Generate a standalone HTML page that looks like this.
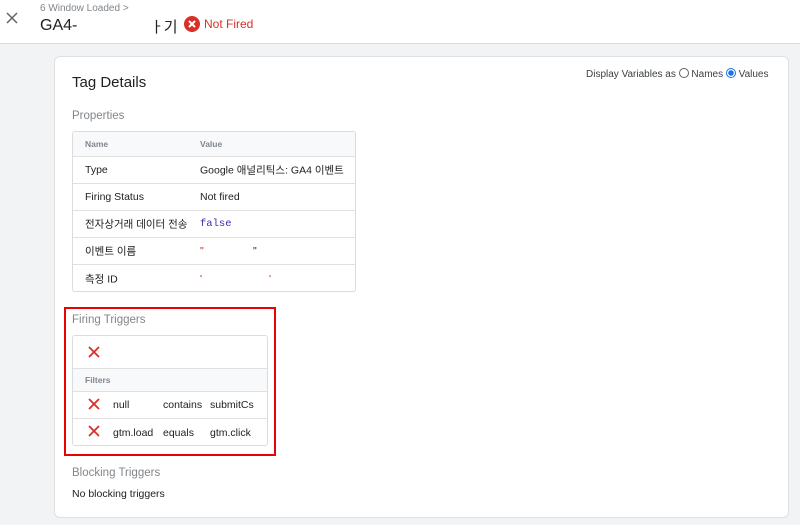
<!DOCTYPE html>
<html><head><meta charset="utf-8"><style>
*{box-sizing:border-box;margin:0;padding:0}
body{width:800px;height:525px;overflow:hidden;background:#f1f3f4;font-family:"Liberation Sans","Noto Sans CJK KR",sans-serif;color:#202124;position:relative}
.hdr{position:absolute;left:0;top:0;width:800px;height:44px;background:#fff;border-bottom:1px solid #dadce0}
.abs{position:absolute;white-space:nowrap}
.card{position:absolute;left:54px;top:56px;width:735px;height:462px;background:#fff;border:1px solid #e0e0e0;border-radius:6px}
.tbl{position:absolute;border:1px solid #dadce0;border-radius:3px;overflow:hidden;background:#fff}
.row{position:absolute;left:0;right:0;border-top:1px solid #e0e0e0;font-size:10.5px}
.row span{position:absolute;top:50%;transform:translateY(-50%)}
.x{position:absolute;width:14px;height:14px}
.sec{font-size:11.5px;color:#80868b;font-weight:500}
</style></head><body>
<div class="hdr">
<svg class="abs" style="left:6px;top:12px" width="12" height="12" viewBox="0 0 12 12"><path d="M1 1L11 11M11 1L1 11" stroke="#5f6368" stroke-width="1.5"/></svg>
<div class="abs" style="left:40px;top:3px;font-size:10px;color:#80868b">6 Window Loaded &gt;</div>
<div class="abs" style="left:40px;top:17px;font-size:16px;color:#202124">GA4-</div>
<div class="abs" style="left:150px;top:16px;font-size:15px;color:#202124">ㅏ기</div>
<svg class="abs" style="left:184px;top:16px" width="16" height="16" viewBox="0 0 16 16"><circle cx="8" cy="8" r="8" fill="#d93025"/><path d="M5 5L11 11M11 5L5 11" stroke="#fff" stroke-width="2"/></svg>
<div class="abs" style="left:204px;top:17px;font-size:12px;color:#d93025">Not Fired</div>
</div>
<div class="card"></div>
<div class="abs" style="left:72px;top:74px;font-size:15px">Tag Details</div>
<div class="abs" style="left:586px;top:68px;font-size:10px;color:#3c4043">Display Variables as <span style="display:inline-block;width:10px;height:10px;border:1px solid #5f6368;border-radius:50%;vertical-align:-1px"></span> Names <span style="display:inline-block;width:10px;height:10px;border:1.5px solid #1a73e8;border-radius:50%;vertical-align:-1px;background:radial-gradient(#1a73e8 2.5px,#fff 3px)"></span> Values</div>
<div class="abs sec" style="left:72px;top:110px">Properties</div>
<div class="tbl" style="left:72px;top:131px;width:284px;height:161px">
<div class="row" style="top:0;height:24px;border:0;background:#f8f9fa;font-size:8.5px;color:#80868b;font-weight:bold"><span style="left:12px">Name</span><span style="left:127px">Value</span></div>
<div class="row" style="top:24px;height:27px"><span style="left:12px">Type</span><span style="left:127px">Google 애널리틱스: GA4 이벤트</span></div>
<div class="row" style="top:51px;height:27px"><span style="left:12px">Firing Status</span><span style="left:127px">Not fired</span></div>
<div class="row" style="top:78px;height:27px"><span style="left:12px">전자상거래 데이터 전송</span><span style="left:127px;color:#3c2db0;font-family:'Liberation Mono',monospace">false</span></div>
<div class="row" style="top:105px;height:27px"><span style="left:12px">이벤트 이름</span><span style="left:127px;color:#c5221f">"</span><span style="left:180px">"</span></div>
<div class="row" style="top:132px;height:29px"><span style="left:12px">측정 ID</span><span style="left:127px;color:#c5221f">'</span><span style="left:196px;color:#c5221f">'</span></div>
</div>
<div class="abs" style="left:64px;top:307px;width:212px;height:149px;border:2px solid #e00"></div>
<div class="abs sec" style="left:72px;top:314px">Firing Triggers</div>
<div class="tbl" style="left:72px;top:335px;width:196px;height:111px">
<div class="row" style="top:0;height:32px;border:0"></div>
<div class="row" style="top:32px;height:23px;background:#f8f9fa;font-size:8.5px;color:#80868b;font-weight:bold"><span style="left:12px">Filters</span></div>
<div class="row" style="top:55px;height:27px"><span style="left:40px">null</span><span style="left:90px">contains</span><span style="left:137px">submitCs</span></div>
<div class="row" style="top:82px;height:29px"><span style="left:40px">gtm.load</span><span style="left:90px">equals</span><span style="left:137px">gtm.click</span></div>
</div>
<svg class="x" style="left:87px;top:345px" viewBox="0 0 14 14"><path d="M2 2L12 12M12 2L2 12" stroke="#d93025" stroke-width="1.8"/></svg>
<svg class="x" style="left:87px;top:397px" viewBox="0 0 14 14"><path d="M2 2L12 12M12 2L2 12" stroke="#d93025" stroke-width="1.8"/></svg>
<svg class="x" style="left:87px;top:424px" viewBox="0 0 14 14"><path d="M2 2L12 12M12 2L2 12" stroke="#d93025" stroke-width="1.8"/></svg>
<div class="abs sec" style="left:72px;top:467px">Blocking Triggers</div>
<div class="abs" style="left:72px;top:488px;font-size:10.5px">No blocking triggers</div>
</body></html>
